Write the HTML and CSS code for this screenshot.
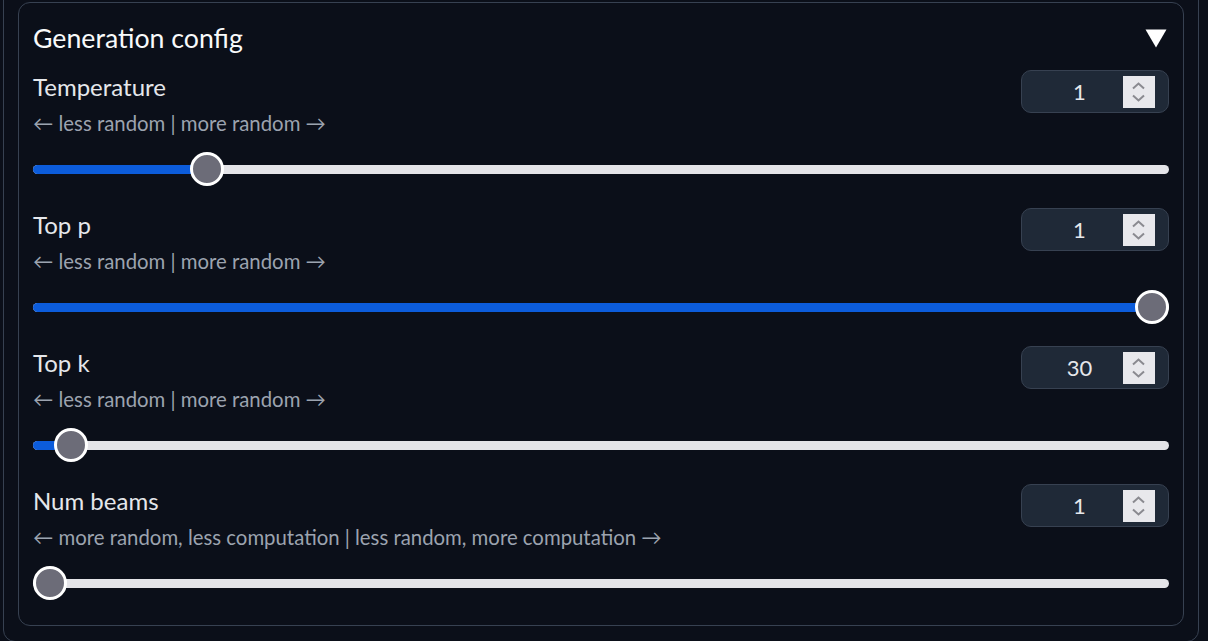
FILE: index.html
```html
<!DOCTYPE html>
<html lang="en">
<head>
<meta charset="utf-8">
<title>Generation config</title>
<link rel="stylesheet" href="styles.css">
</head>
<body>
<div class="outer">
  <section class="panel">
    <div class="panel-head">
      <h2 class="panel-title">Generation config</h2>
      <svg class="caret" width="22" height="19" viewBox="0 0 22 19"><polygon points="0.5,0.5 21.5,0.5 11,18.5" fill="#ffffff"/></svg>
    </div>

    <div class="setting">
      <div class="setting-head">
        <div class="setting-text">
          <div class="setting-label">Temperature</div>
          <div class="setting-hint">← less random | more random →</div>
        </div>
        <div class="num-box">
          <span class="num-value">1</span>
          <span class="spinner"><svg width="32" height="32" viewBox="0 0 32 32"><polyline points="10,12.5 15.5,7.5 21,12.5" fill="none" stroke="#8a8a90" stroke-width="2"/><polyline points="10,19.5 15.5,24.5 21,19.5" fill="none" stroke="#8a8a90" stroke-width="2"/></svg></span>
        </div>
      </div>
      <div class="slider">
        <div class="track"><div class="fill" style="width: calc(17px + (100% - 34px) * 0.1426)"></div></div>
        <div class="thumb" style="left: calc((100% - 34px) * 0.1426)"></div>
      </div>
    </div>

    <div class="setting">
      <div class="setting-head">
        <div class="setting-text">
          <div class="setting-label">Top p</div>
          <div class="setting-hint">← less random | more random →</div>
        </div>
        <div class="num-box">
          <span class="num-value">1</span>
          <span class="spinner"><svg width="32" height="32" viewBox="0 0 32 32"><polyline points="10,12.5 15.5,7.5 21,12.5" fill="none" stroke="#8a8a90" stroke-width="2"/><polyline points="10,19.5 15.5,24.5 21,19.5" fill="none" stroke="#8a8a90" stroke-width="2"/></svg></span>
        </div>
      </div>
      <div class="slider">
        <div class="track"><div class="fill" style="width: calc(17px + (100% - 34px) * 1)"></div></div>
        <div class="thumb" style="left: calc((100% - 34px) * 1)"></div>
      </div>
    </div>

    <div class="setting">
      <div class="setting-head">
        <div class="setting-text">
          <div class="setting-label">Top k</div>
          <div class="setting-hint">← less random | more random →</div>
        </div>
        <div class="num-box">
          <span class="num-value">30</span>
          <span class="spinner"><svg width="32" height="32" viewBox="0 0 32 32"><polyline points="10,12.5 15.5,7.5 21,12.5" fill="none" stroke="#8a8a90" stroke-width="2"/><polyline points="10,19.5 15.5,24.5 21,19.5" fill="none" stroke="#8a8a90" stroke-width="2"/></svg></span>
        </div>
      </div>
      <div class="slider">
        <div class="track"><div class="fill" style="width: calc(17px + (100% - 34px) * 0.019)"></div></div>
        <div class="thumb" style="left: calc((100% - 34px) * 0.019)"></div>
      </div>
    </div>

    <div class="setting">
      <div class="setting-head">
        <div class="setting-text">
          <div class="setting-label">Num beams</div>
          <div class="setting-hint">← more random, less computation | less random, more computation →</div>
        </div>
        <div class="num-box">
          <span class="num-value">1</span>
          <span class="spinner"><svg width="32" height="32" viewBox="0 0 32 32"><polyline points="10,12.5 15.5,7.5 21,12.5" fill="none" stroke="#8a8a90" stroke-width="2"/><polyline points="10,19.5 15.5,24.5 21,19.5" fill="none" stroke="#8a8a90" stroke-width="2"/></svg></span>
        </div>
      </div>
      <div class="slider">
        <div class="track"><div class="fill" style="width: 0"></div></div>
        <div class="thumb" style="left: 0"></div>
      </div>
    </div>
  </section>
</div>
</body>
</html>
```
FILE: styles.css
```css
html, body {
  margin: 0;
  padding: 0;
  background: #0b0f19;
  overflow: hidden;
}
body {
  font-family: "Lato", "DejaVu Sans", sans-serif;
  color: #e5e7eb;
}
.outer {
  margin: -20px 9px 0 3px;
  padding: 21px 14px 15px 14px;
  border: 1px solid #374151;
  border-radius: 12px;
}
.panel {
  border: 1px solid #374151;
  border-radius: 12px;
  padding: 17px 14px 25px 14px;
}
.panel-head {
  display: flex;
  justify-content: space-between;
  align-items: center;
  height: 36px;
  margin-bottom: 14px;
  padding-right: 2px;
}
.panel-title {
  margin: 0;
  font-size: 26.7px;
  font-weight: 400;
  line-height: 32px;
  margin-top: -1px;
  color: #f9fafb;
}
.caret { display: block; }
.setting { margin-bottom: 22px; }
.setting:last-child { margin-bottom: 0; }
.setting-head {
  display: flex;
  justify-content: space-between;
  align-items: flex-start;
}
.setting-label {
  margin-top: 2px;
  font-size: 24px;
  line-height: 30px;
  color: #e5e7eb;
}
.setting-hint {
  margin-top: 8px;
  font-size: 20.35px;
  line-height: 26px;
  color: #9ca3af;
}
.num-box {
  box-sizing: border-box;
  width: 148px;
  height: 43px;
  display: flex;
  align-items: center;
  background: #1f2937;
  border: 1px solid #374151;
  border-radius: 10px;
  padding-right: 13px;
}
.num-value {
  flex: 1;
  padding-left: 14px;
  text-align: center;
  font-size: 22px;
  color: #e5e7eb;
}
.spinner {
  width: 32px;
  height: 32px;
  background: #e8e8ec;
}
.spinner svg { display: block; }
.slider {
  position: relative;
  height: 34px;
  margin-top: 16px;
  display: flex;
  align-items: center;
}
.track {
  flex: 1;
  height: 9px;
  border-radius: 5px;
  background: #e4e4e8;
  overflow: hidden;
}
.fill {
  height: 100%;
  background: #0c5cdb;
}
.thumb {
  position: absolute;
  top: 0;
  box-sizing: border-box;
  width: 34px;
  height: 34px;
  border-radius: 50%;
  background: #6c6c78;
  border: 3px solid #ffffff;
}
```
